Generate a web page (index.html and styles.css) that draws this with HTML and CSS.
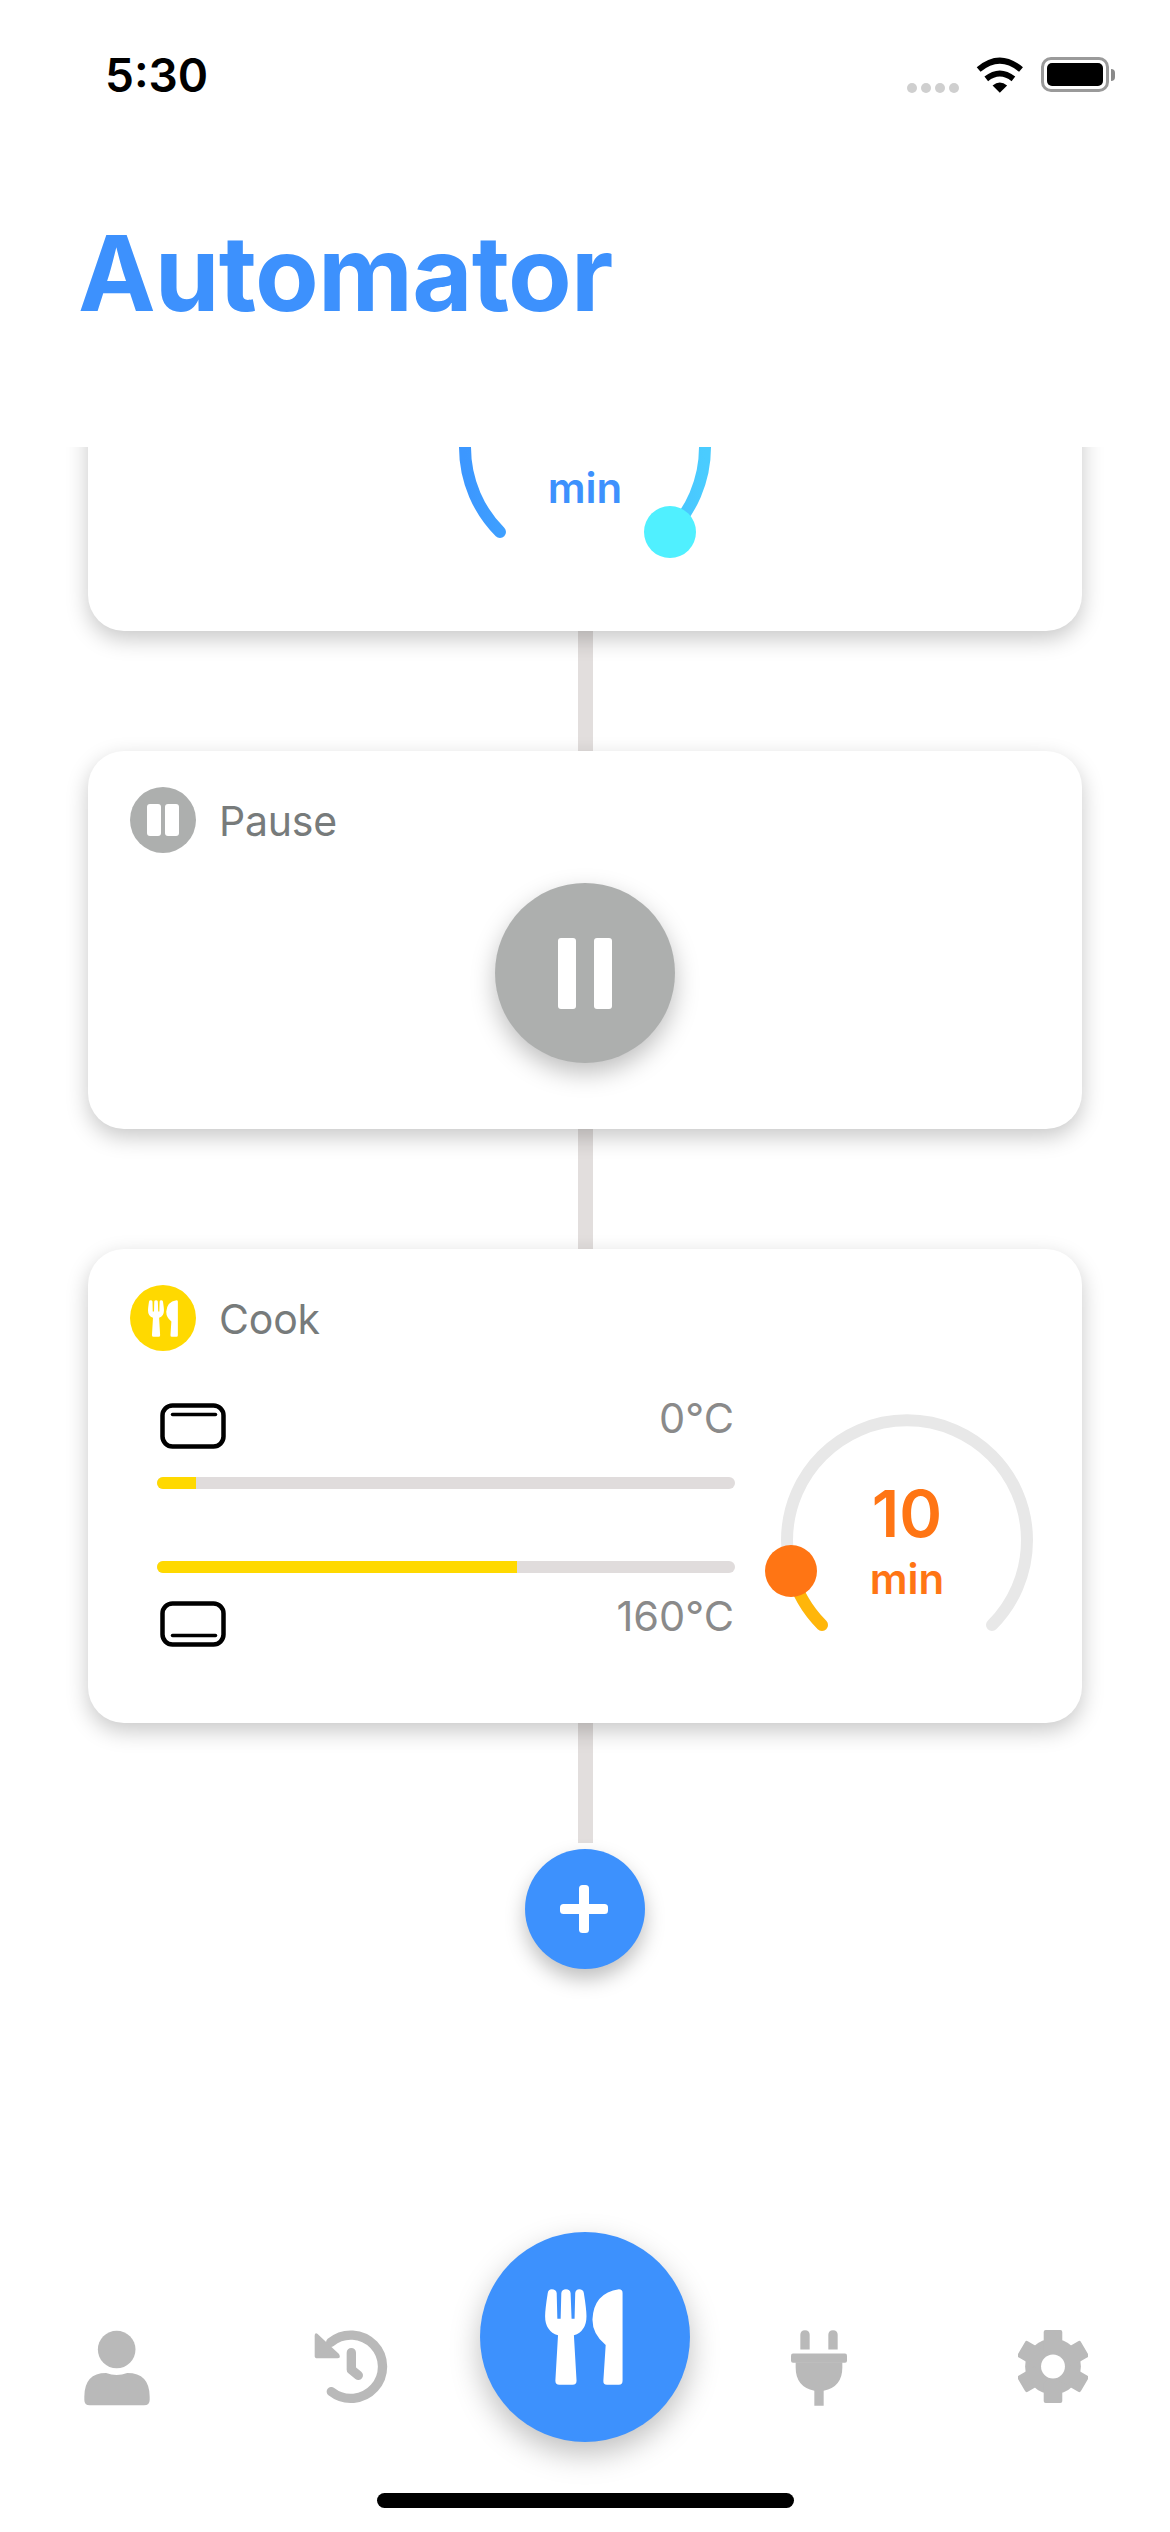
FILE: index.html
```html
<!DOCTYPE html>
<html lang="en">
<head>
    <meta charset="UTF-8">
    <meta name="viewport" content="width=device-width, initial-scale=1.0">
    <title>Automator</title>
    <link rel="stylesheet" href="styles.css">
</head>
<body>
    <svg class="defs">
        <symbol id="cutlery" viewBox="135 113 235 290">
            <path d="M143 125 Q145 114 155 114 Q168 114 170 125 L172 203 L182 203 L184 125 Q186 114 198 114 Q210 114 212 125 L215 203 L224 203 L226 125 Q228 114 238 114 Q250 114 252 125 Q260 175 260 195 Q260 240 222 253 L230 390 Q230 402 218 402 L178 402 Q166 402 166 390 L174 253 Q135 240 135 195 Q135 175 143 125 Z"/>
            <path d="M358 114 Q369 114 369 125 L369 390 Q369 402 358 402 L322 402 Q310 402 311 390 L318 282 Q278 250 278 205 Q282 125 358 114 Z"/>
        </symbol>
    </svg>

    <header class="status">
        <span class="time">5:30</span>
        <div class="status-icons">
            <div class="signal"><i></i><i></i><i></i><i></i></div>
            <svg class="wifi" viewBox="285 45 145 107">
                <path d="M293 82 Q357 28 421 82" fill="none" stroke="#000" stroke-width="18"/>
                <path d="M316 110 Q357 78 398 110" fill="none" stroke="#000" stroke-width="18"/>
                <path d="M357 152 L335 130 Q357 112 379 130 Z"/>
            </svg>
            <div class="battery"><div class="battery-level"></div></div>
            <div class="battery-nub"></div>
        </div>
    </header>

    <h1 class="title">Automator</h1>

    <main class="flow">
        <section class="card card-clipped">
            <div class="dial">
                <svg class="dial-svg" viewBox="-160 -160 320 280">
                    <defs>
                        <linearGradient id="preheat" gradientUnits="userSpaceOnUse" x1="-120" y1="0" x2="120" y2="0">
                            <stop offset="0" stop-color="#3c97ff"/>
                            <stop offset="1" stop-color="#4accff"/>
                        </linearGradient>
                    </defs>
                    <path d="M-85 85 A120 120 0 1 1 85 85" fill="none" stroke="url(#preheat)" stroke-width="12" stroke-linecap="round"/>
                    <circle cx="85" cy="85" r="26" fill="#50f0ff"/>
                </svg>
                <div class="dial-label dial-label-blue">min</div>
            </div>
        </section>

        <div class="connector"></div>

        <section class="card">
            <div class="card-head">
                <div class="badge badge-grey">
                    <span class="bar-small"></span><span class="bar-small"></span>
                </div>
                <span class="card-name">Pause</span>
            </div>
            <div class="pause-button">
                <span class="bar-big"></span><span class="bar-big"></span>
            </div>
        </section>

        <div class="connector"></div>

        <section class="card">
            <div class="card-head">
                <div class="badge badge-yellow">
                    <svg class="badge-cutlery"><use href="#cutlery"/></svg>
                </div>
                <span class="card-name">Cook</span>
            </div>
            <div class="cook-body">
                <div class="heaters">
                    <div class="heater-row">
                        <svg class="oven" viewBox="0 0 66 46">
                            <rect x="2.5" y="2.5" width="61" height="41" rx="10" fill="none" stroke="#000" stroke-width="4.5"/>
                            <path d="M12.5 11.5 H55.5" stroke="#000" stroke-width="3.5" stroke-linecap="round"/>
                        </svg>
                        <span class="temp">0°C</span>
                    </div>
                    <div class="track track-top"><div class="fill" style="width: 6.7%"></div></div>
                    <div class="track track-bottom"><div class="fill" style="width: 62.3%"></div></div>
                    <div class="heater-row">
                        <svg class="oven" viewBox="0 0 66 46">
                            <rect x="2.5" y="2.5" width="61" height="41" rx="10" fill="none" stroke="#000" stroke-width="4.5"/>
                            <path d="M12.5 34.5 H55.5" stroke="#000" stroke-width="3.5" stroke-linecap="round"/>
                        </svg>
                        <span class="temp">160°C</span>
                    </div>
                </div>
                <div class="dial">
                    <svg class="dial-svg" viewBox="-160 -160 320 280">
                        <path d="M-85 85 A120 120 0 1 1 85 85" fill="none" stroke="#e8e8e8" stroke-width="12" stroke-linecap="round"/>
                        <path d="M-85 85 A120 120 0 0 1 -116 31" fill="none" stroke="#ffb60a" stroke-width="12" stroke-linecap="round"/>
                        <circle cx="-116" cy="31" r="26" fill="#ff7514"/>
                    </svg>
                    <div class="dial-label">
                        <div class="dial-value">10</div>
                        <div class="dial-unit">min</div>
                    </div>
                </div>
            </div>
        </section>

        <div class="connector"></div>

        <button class="add-button" type="button">
            <svg class="plus" viewBox="0 0 48 48">
                <rect x="19" y="0" width="10" height="48" rx="3.5" fill="#fff"/>
                <rect x="0" y="19" width="48" height="10" rx="3.5" fill="#fff"/>
            </svg>
        </button>
    </main>

    <footer class="tabbar">
        <nav class="tabs">
            <div class="tab">
                <svg class="tab-user" viewBox="68 209 200 228">
                    <circle cx="167" cy="267" r="57"/>
                    <path d="M69 410 Q69 338 135 338 Q167 350 199 338 Q267 338 267 410 L267 420 Q267 436 250 436 L85 436 Q69 436 69 420 Z"/>
                </svg>
            </div>
            <div class="tab">
                <svg class="tab-history" viewBox="760 213 222 222">
                    <path d="M812 398 A95 95 0 1 0 810 250" fill="none" stroke="#b9b9b9" stroke-width="28" stroke-linecap="round"/>
                    <path d="M770 224 L835 285 Q842 298 830 298 L770 298 Q762 298 762 290 L762 232 Q762 220 770 224 Z"/>
                    <path d="M872 281 L872 332 L893 349" fill="none" stroke="#b9b9b9" stroke-width="28" stroke-linecap="round" stroke-linejoin="round"/>
                </svg>
            </div>
            <div class="tab">
                <div class="main-button">
                    <svg class="main-cutlery"><use href="#cutlery"/></svg>
                </div>
            </div>
            <div class="tab">
                <svg class="tab-plug" viewBox="90 120 168 227">
                    <path d="M118 134 Q118 120 132 120 Q146 120 146 134 L146 178 L118 178 Z"/>
                    <path d="M202 134 Q202 120 216 120 Q230 120 230 134 L230 178 L202 178 Z"/>
                    <rect x="90" y="190" width="168" height="28" rx="6"/>
                    <path d="M104 216 L244 216 L244 232 Q244 290 188 302 L188 347 L160 347 L160 302 Q104 290 104 232 Z"/>
                </svg>
            </div>
            <div class="tab">
                <svg class="tab-gear" viewBox="-105 -110 210 220">
                    <circle r="84"/>
                    <rect x="-28" y="-110" width="56" height="220" rx="6"/>
                    <rect x="-28" y="-110" width="56" height="220" rx="6" transform="rotate(60)"/>
                    <rect x="-28" y="-110" width="56" height="220" rx="6" transform="rotate(120)"/>
                    <circle r="36" fill="#fff"/>
                </svg>
            </div>
        </nav>
        <div class="home-indicator"></div>
    </footer>
</body>
</html>
```

FILE: styles.css
```css
body {
    margin: 0;
    width: 1170px;
    height: 2532px;
    display: flex;
    flex-direction: column;
    overflow: hidden;
    background: #fff;
    font-family: Inter, "Liberation Sans", sans-serif;
}
.defs {
    display: none;
}

/* status bar */
.status {
    height: 130px;
    box-sizing: border-box;
    padding: 50px 55px 0 105px;
    display: flex;
    justify-content: space-between;
    align-items: flex-start;
}
.time {
    font-size: 46px;
    line-height: 50px;
    font-weight: 600;
    color: #000;
}
.status-icons {
    display: flex;
    align-items: center;
    padding-top: 6px;
}
.signal {
    display: flex;
    gap: 4px;
    margin: 27px 17px 0 0;
}
.signal i {
    width: 10px;
    height: 10px;
    border-radius: 50%;
    background: #cfcfcf;
}
.wifi {
    width: 48px;
    height: 36px;
    margin-right: 17px;
}
.battery {
    width: 68px;
    height: 35px;
    box-sizing: border-box;
    border: 3px solid #9a9a9a;
    border-radius: 10px;
    padding: 3px;
}
.battery-level {
    height: 100%;
    background: #000;
    border-radius: 5px;
}
.battery-nub {
    width: 4px;
    height: 12px;
    margin-left: 2px;
    border-radius: 0 6px 6px 0;
    background: #8a8a8a;
}

/* title */
.title {
    height: 317px;
    box-sizing: border-box;
    margin: 0;
    padding: 95px 0 0 78px;
    font-size: 104px;
    line-height: 96px;
    font-weight: 700;
    letter-spacing: -0.8px;
    color: #3d91fd;
}

/* scrolling list of steps */
.flow {
    flex: 1;
    min-height: 0;
    overflow: hidden;
    display: flex;
    flex-direction: column;
    align-items: center;
}
.card {
    width: 994px;
    box-sizing: border-box;
    flex: none;
    background: #fff;
    border-radius: 36px;
    padding: 36px 0 0 0;
    box-shadow: 0 8px 22px rgba(0, 0, 0, 0.22);
    position: relative;
    z-index: 1;
}
.card-clipped {
    margin-top: -200px;
    padding: 40px 0 64px 0;
    display: flex;
    justify-content: center;
}
.connector {
    width: 15px;
    height: 120px;
    flex: none;
    background: #e2dedd;
}
.card-head {
    display: flex;
    align-items: center;
    gap: 23px;
    padding-left: 42px;
}
.badge {
    width: 66px;
    height: 66px;
    border-radius: 50%;
    display: flex;
    align-items: center;
    justify-content: center;
}
.badge-grey {
    background: #adafae;
    gap: 4px;
}
.badge-yellow {
    background: #ffd900;
}
.badge-cutlery {
    width: 30px;
    height: 37px;
    fill: #fff;
}
.bar-small {
    width: 14px;
    height: 32px;
    background: #fff;
    border-radius: 3px;
}
.card-name {
    padding-top: 2px;
    font-size: 41px;
    line-height: 50px;
    letter-spacing: -0.2px;
    color: #777b7b;
}

/* pause step */
.pause-button {
    width: 180px;
    height: 180px;
    margin: 30px auto 66px;
    border-radius: 50%;
    background: #adafae;
    box-shadow: 0 10px 25px rgba(0, 0, 0, 0.25);
    display: flex;
    align-items: center;
    justify-content: center;
    gap: 18px;
}
.bar-big {
    width: 18px;
    height: 71px;
    background: #fff;
    border-radius: 3px;
}

/* cook step */
.cook-body {
    display: flex;
    gap: 12px;
    padding: 29px 0 63px 69px;
}
.heaters {
    width: 578px;
    padding-top: 23px;
}
.heater-row {
    height: 46px;
    padding: 0 1px 0 3px;
    display: flex;
    justify-content: space-between;
    align-items: flex-start;
}
.oven {
    width: 66px;
    height: 46px;
}
.temp {
    font-size: 41.5px;
    line-height: 30px;
    color: #8a8a8a;
}
.track {
    height: 12px;
    border-radius: 6px;
    background: #e0dcdc;
    overflow: hidden;
}
.track-top {
    margin-top: 28px;
}
.track-bottom {
    margin: 72px 0 28px;
}
.fill {
    height: 100%;
    background: #ffd900;
}

/* time dial, label stacked on the svg */
.dial {
    display: grid;
    width: 320px;
    height: 280px;
}
.dial-svg {
    grid-area: 1 / 1;
    width: 320px;
    height: 280px;
}
.dial-label {
    grid-area: 1 / 1;
    justify-self: center;
    padding-top: 102px;
    text-align: center;
    font-size: 42px;
    line-height: 48px;
    font-weight: 600;
    color: #ff7514;
}
.dial-label-blue {
    padding-top: 177px;
    color: #3d91fd;
}
.dial-value {
    font-size: 65px;
    line-height: 64px;
}
.dial-unit {
    margin-top: 9px;
}

/* add step */
.add-button {
    width: 120px;
    height: 120px;
    flex: none;
    margin-top: 6px;
    padding: 0;
    border: none;
    border-radius: 50%;
    background: #3d91fd;
    box-shadow: 0 10px 20px rgba(0, 0, 0, 0.25);
    display: flex;
    align-items: center;
    justify-content: center;
}
.plus {
    width: 48px;
    height: 48px;
    margin-right: 2px;
}

/* bottom bar */
.tabbar {
    height: 300px;
    flex: none;
}
.tabs {
    display: grid;
    grid-template-columns: repeat(5, 1fr);
    height: 210px;
}
.tab {
    display: flex;
    justify-content: center;
    padding-top: 98px;
    fill: #b9b9b9;
}
.tab-user {
    width: 66px;
    height: 76px;
}
.tab-history {
    width: 74px;
    height: 74px;
}
.tab-plug {
    width: 56px;
    height: 76px;
}
.tab-gear {
    width: 70px;
    height: 73px;
}
.tab:nth-child(3) {
    padding-top: 0;
}
.main-button {
    width: 210px;
    height: 210px;
    flex: none;
    border-radius: 50%;
    background: #3d91fd;
    box-shadow: 0 12px 30px rgba(0, 0, 0, 0.25);
    display: flex;
    align-items: center;
    justify-content: center;
}
.main-cutlery {
    width: 78px;
    height: 96px;
    margin-right: 2px;
    fill: #fff;
}
.home-indicator {
    width: 417px;
    height: 15px;
    margin: 51px auto 0;
    border-radius: 8px;
    background: #000;
}
```
